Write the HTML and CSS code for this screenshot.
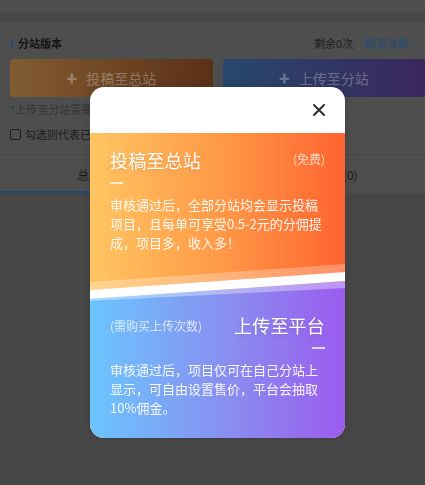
FILE: index.html
```html
<!DOCTYPE html>
<html lang="zh-CN">
<head>
<meta charset="utf-8">
<title>分站版本</title>
<link rel="stylesheet" href="styles.css">
</head>
<body>
<div class="page">
  <div class="topbar"></div>
  <div class="panel">
    <div class="section">
      <div class="sec-head">
        <div class="sec-title">分站版本</div>
        <div class="sec-extra"><span class="remain">剩余0次</span><span class="sep">|</span><span class="buy">购买次数 ›</span></div>
      </div>
      <div class="btns">
        <div class="btn btn-main"><span class="plus">✚</span>投稿至总站</div>
        <div class="btn btn-sub"><span class="plus">✚</span>上传至分站</div>
      </div>
      <div class="note">*上传至分站需要购买上传次数</div>
      <label class="check"><span class="box"></span>勾选则代表已阅读并同意协议</label>
    </div>
    <div class="tabs">
      <div class="tab active">总站项目(0)</div>
      <div class="tab">分站项目(0)</div>
    </div>
  </div>
</div>

<div class="mask">
  <div class="modal">
    <div class="modal-head">
      <svg class="close" width="12" height="12" viewBox="0 0 12 12"><path d="M1 1L11 11M11 1L1 11" stroke="#2b2b2b" stroke-width="1.9" stroke-linecap="round"/></svg>
    </div>
    <div class="card card-main">
      <div class="card-row">
        <div class="card-title">投稿至总站</div>
        <div class="card-tag">(免费)</div>
      </div>
      <div class="dash"></div>
      <p class="card-text">审核通过后，全部分站均会显示投稿项目，且每单可享受0.5-2元的分佣提成，项目多，收入多！</p>
    </div>
    <div class="card card-sub">
      <div class="card-row">
        <div class="card-tag">(需购买上传次数)</div>
        <div class="card-title">上传至平台</div>
      </div>
      <div class="dash dash-right"></div>
      <p class="card-text">审核通过后，项目仅可在自己分站上显示，可自由设置售价，平台会抽取10%佣金。</p>
    </div>
    <svg class="wave" width="255" height="45" viewBox="0 0 255 45" preserveAspectRatio="none">
      <defs>
        <linearGradient id="blueg" gradientUnits="userSpaceOnUse" x1="0" y1="0" x2="255" y2="0">
          <stop offset="0" stop-color="#6bc5fd"/>
          <stop offset="0.55" stop-color="#8a8df0"/>
          <stop offset="1" stop-color="#9b5bee"/>
        </linearGradient>
      </defs>
      <polygon points="0,20 255,2 255,10 0,28" fill="#fff" fill-opacity="0.28"/>
      <polygon points="0,37 255,19 255,45 0,45" fill="url(#blueg)"/>
      <polygon points="0,28 255,10 255,19 0,37" fill="#fff"/>
      <polygon points="0,37 255,19 255,26 0,39" fill="#fff" fill-opacity="0.35"/>
    </svg>
  </div>
</div>
</body>
</html>
```
FILE: styles.css
```css
html, body {
  margin: 0;
  padding: 0;
  overflow: hidden;
  background: #474747;
  font-family: "Noto Sans CJK SC", "Noto Sans", sans-serif;
}

.page {
  width: 435px;
  min-height: 485px;
  background: #474747;
}

.topbar {
  height: 12px;
  background: #4e4e4e;
}

.panel {
  margin-top: 10px;
  background: #4e4e4e;
}

.section {
  padding: 13px 10px 12px;
  border-bottom: 1px solid #464646;
}

.sec-head {
  display: flex;
  justify-content: space-between;
  align-items: center;
  height: 16px;
}

.sec-title {
  font-size: 11px;
  font-weight: bold;
  color: #141414;
  line-height: 16px;
  border-left: 2px solid #1c4e78;
  padding-left: 5px;
  margin-left: 1px;
  height: 9px;
  display: flex;
  align-items: center;
}

.sec-extra {
  font-size: 11px;
  line-height: 16px;
  display: flex;
  align-items: center;
  margin-right: 11px;
}

.remain { color: #1c1c1c; }
.sep { color: #5c5c5c; margin: 0 4px; }
.buy { color: #1b4d7c; }

.btns {
  display: flex;
  gap: 10px;
  margin-top: 8px;
}

.btn {
  flex: 1;
  height: 38px;
  border-radius: 4px;
  display: flex;
  align-items: center;
  justify-content: center;
  font-size: 14px;
  color: rgba(255, 255, 255, 0.3);
}

.btn-main { background: linear-gradient(90deg, #825c31, #5a3118); }
.btn-sub { background: linear-gradient(90deg, #27486b, #3b265c); }

.plus {
  font-size: 11px;
  margin-right: 9px;
}

.note {
  margin-top: 4px;
  font-size: 11px;
  line-height: 16px;
  color: #363636;
}

.check {
  margin-top: 9px;
  display: flex;
  align-items: center;
  font-size: 11px;
  line-height: 16px;
  color: #1c1c1c;
}

.box {
  width: 9px;
  height: 9px;
  border: 1px solid #1c1c1c;
  border-radius: 2px;
  margin-right: 4px;
}

.tabs {
  display: flex;
  height: 38px;
}

.tab {
  flex: 1;
  display: flex;
  align-items: center;
  justify-content: center;
  font-size: 12px;
  color: #1a1a1a;
  box-sizing: border-box;
}

.tab.active {
  border-bottom: 2px solid #1b4a72;
  padding-top: 2px;
}

.mask {
  position: fixed;
  inset: 0;
}

.modal {
  position: absolute;
  left: 90px;
  top: 87px;
  width: 255px;
  border-radius: 14px;
  overflow: hidden;
  background: #fff;
  box-shadow: 0 0 12px rgba(0, 0, 0, 0.12);
}

.modal-head {
  height: 46px;
  display: flex;
  justify-content: flex-end;
  align-items: center;
  padding-right: 20px;
}

.close { display: block; }

.card {
  padding: 14px 20px 0;
  color: #fff;
}

.card-main {
  height: 157px;
  box-sizing: border-box;
  background: linear-gradient(90deg, #ffc562, #ff9a48 50%, #ff642f);
}

.card-sub {
  height: 148px;
  box-sizing: border-box;
  padding-top: 22px;
  background: linear-gradient(90deg, #6bc5fd, #8a8df0 55%, #9b5bee);
}

.card-row {
  display: flex;
  justify-content: space-between;
  align-items: center;
  height: 26px;
}

.card-title {
  font-size: 18px;
  letter-spacing: 0.2px;
  text-shadow: 0 2px 4px rgba(0, 0, 0, 0.12);
}

.card-tag {
  font-size: 12px;
  color: rgba(255, 255, 255, 0.72);
}

.card-main .card-tag { margin-top: -4px; }

.dash {
  width: 13px;
  height: 2px;
  margin-top: 9px;
  background: rgba(255, 255, 255, 0.7);
}

.dash-right { margin-left: auto; }

.card-text {
  margin: 11px 0 0;
  font-size: 13px;
  line-height: 19px;
  color: rgba(255, 255, 255, 0.92);
}

.wave {
  position: absolute;
  left: 0;
  top: 175px;
  display: block;
}
```
